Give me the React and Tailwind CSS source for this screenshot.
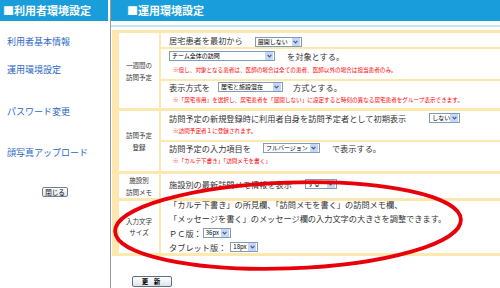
import React from 'react';

const FONT = { fontFamily: '"Noto Sans CJK JP", "Noto Sans", sans-serif' };

// small XP-style dropdown
const Sel = ({ className, children }) => (
  <span className={`inline-flex items-center h-[10px] border border-[#7f9db9] bg-white align-middle ${className}`}>
    <span className="flex-1 pl-[2px] text-[6px] leading-[8px] text-black whitespace-nowrap">{children}</span>
    <span className="w-[8px] h-[8px] mr-px shrink-0 bg-[#c6d6f4] flex items-center justify-center">
      <svg width="5" height="4" viewBox="0 0 5 4">
        <path d="M0.6 0.8 L2.5 2.8 L4.4 0.8" fill="none" stroke="#3d5a94" strokeWidth="1.2" />
      </svg>
    </span>
  </span>
);

const Note = ({ children }) => (
  <div className="pl-[4px] text-[5.6px] text-[#f00] whitespace-nowrap">{children}</div>
);

const Label = ({ children, className = '' }) => (
  <div className={`w-[40px] shrink-0 bg-white flex items-center justify-center text-center text-[6.5px] text-[#333] ${className}`}>
    <div>{children}</div>
  </div>
);

const Cell = ({ className = '', children }) => (
  <div className={`bg-white pl-[8px] text-[8.2px] text-[#333] whitespace-nowrap ${className}`}>{children}</div>
);

const sideLinks = [
  { text: '利用者基本情報', mt: 'mt-[15px]' },
  { text: '運用環境設定', mt: 'mt-[16px]' },
  { text: 'パスワード変更', mt: 'mt-[30px]' },
  { text: '顔写真アップロード', mt: 'mt-[29px]' },
];

export default function App() {
  return (
    <div className="relative w-[500px] h-[288px] bg-white overflow-hidden flex" style={FONT}>
      {/* left menu */}
      <div className="w-[110px] shrink-0 flex flex-col">
        <div className="w-[108px] h-[21px] bg-[#1a9edb] text-white font-bold text-[11px] leading-[21px] pl-[3px] whitespace-nowrap">
          ■利用者環境設定
        </div>
        {sideLinks.map((l) => (
          <div key={l.text} className={`${l.mt} pl-[7px] text-[9px] leading-[12px] text-[#2c67c5]`}>
            {l.text}
          </div>
        ))}
        <div className="mt-[28px] flex justify-center">
          <button className="w-[26px] h-[10px] border border-[#6f7f99] rounded-[2px] bg-gradient-to-b from-white to-[#dde3ea] text-[6.5px] leading-none text-black">
            閉じる
          </button>
        </div>
      </div>

      <div className="w-px shrink-0 bg-[#9c9c9c]" />

      {/* main panel */}
      <div className="flex-1 flex flex-col">
        <div className="h-[21px] bg-[#1a9edb] text-white font-bold text-[11px] leading-[21px] pl-[16px]">
          ■運用環境設定
        </div>
        <div className="mt-[4px] h-[4px] border-y border-[#cbe4f2]" />

        <div className="mt-[3px] ml-px bg-[#fde8b0] pl-[7px] pt-[3px] pb-[3px] flex flex-col gap-[3px]">
          {/* row 1 */}
          <div className="flex gap-[2px] h-[75px]">
            <Label className="leading-[12px]">一週間の<br />訪問予定</Label>
            <div className="flex-1 flex flex-col gap-[2px]">
              <Cell className="h-[14px] leading-[14px]">
                居宅患者を最初から<Sel className="ml-[12px] w-[47px] h-[9px]">展開しない</Sel>
              </Cell>
              <Cell className="h-[30px]">
                <div className="leading-[14px] flex items-center h-[14px]">
                  <Sel className="w-[106px]">チーム全体の訪問</Sel>
                  <span className="ml-[12px]">を対象とする。</span>
                </div>
                <div className="leading-[14px]">
                  <Note>※但し、対象となる患者は、医師の場合は全ての患者、医師以外の場合は担当患者のみ。</Note>
                </div>
              </Cell>
              <Cell className="h-[27px]">
                <div className="leading-[12px] flex items-center h-[12px]">
                  表示方式を<Sel className="ml-[8px] w-[65px]">居宅と施設混在</Sel>
                  <span className="ml-[10px]">方式とする。</span>
                </div>
                <div className="leading-[14px]">
                  <Note>※「居宅専用」を選択し、居宅患者を「展開しない」に設定すると時刻の異なる居宅患者をグループ表示できます。</Note>
                </div>
              </Cell>
            </div>
          </div>

          {/* row 2 */}
          <div className="flex gap-[2px] h-[60px]">
            <Label className="leading-[12px]">訪問予定<br />登録</Label>
            <div className="flex-1 flex flex-col gap-[2px]">
              <Cell className="h-[29px]">
                <div className="leading-[14px] flex items-center h-[14px]">
                  訪問予定の新規登録時に利用者自身を訪問予定者として初期表示
                  <Sel className="ml-[23px] w-[31px]">しない</Sel>
                </div>
                <div className="leading-[12px]">
                  <Note>※訪問予定者１に登録されます。</Note>
                </div>
              </Cell>
              <Cell className="h-[29px]">
                <div className="leading-[12px] flex items-center h-[12px]">
                  訪問予定の入力項目を<Sel className="ml-[12px] w-[57px]">フルバージョン</Sel>
                  <span className="ml-[12px]">で表示する。</span>
                </div>
                <div className="leading-[14px]">
                  <Note>※「カルテ下書き」「訪問メモを書く」</Note>
                </div>
              </Cell>
            </div>
          </div>

          {/* row 3 */}
          <div className="flex gap-[2px] h-[24px]">
            <Label className="leading-[12px]">施設別<br />訪問メモ</Label>
            <Cell className="flex-1 pt-[3px]">
              <div className="leading-[14px] flex items-center h-[14px]">
                施設別の最新訪問メモ情報を表示<Sel className="ml-[13px] w-[32px]">する</Sel>
              </div>
            </Cell>
          </div>

          {/* row 4 */}
          <div className="flex gap-[2px] h-[52px]">
            <Label className="leading-[11px]">入力文字<br />サイズ</Label>
            <Cell className="flex-1">
              <div className="-mt-[4px] leading-[14.3px]">
                <div>「カルテ下書き」の所見欄、「訪問メモを書く」の訪問メモ欄、</div>
                <div>「メッセージを書く」のメッセージ欄の入力文字の大きさを調整できます。</div>
                <div className="flex items-center h-[14.3px]">
                  ＰＣ版：<Sel className="ml-px w-[28px] h-[9px]">36px</Sel>
                </div>
                <div className="flex items-center h-[14.3px]">
                  タブレット版：<Sel className="ml-[4px] w-[28px] h-[9px]">18px</Sel>
                </div>
              </div>
            </Cell>
          </div>
        </div>

        <div className="mt-[2px] ml-px h-px bg-[#b4b4b4]" />
        <div className="mt-[7px] ml-[21px]">
          <button className="w-[40px] h-[11px] border border-[#5f6f88] rounded-[2px] bg-gradient-to-b from-white to-[#dfe4ea] text-[6.5px] leading-none text-black font-bold tracking-[2px]">
            更 新
          </button>
        </div>
      </div>

      {/* red hand-drawn ellipse over the font size row */}
      <svg className="absolute inset-0 pointer-events-none" width="500" height="288" viewBox="0 0 500 288">
        <ellipse cx="288" cy="225.5" rx="173" ry="43" transform="rotate(-2 288 225.5)" fill="none" stroke="#e8000b" strokeWidth="3.8" />
      </svg>
    </div>
  );
}
